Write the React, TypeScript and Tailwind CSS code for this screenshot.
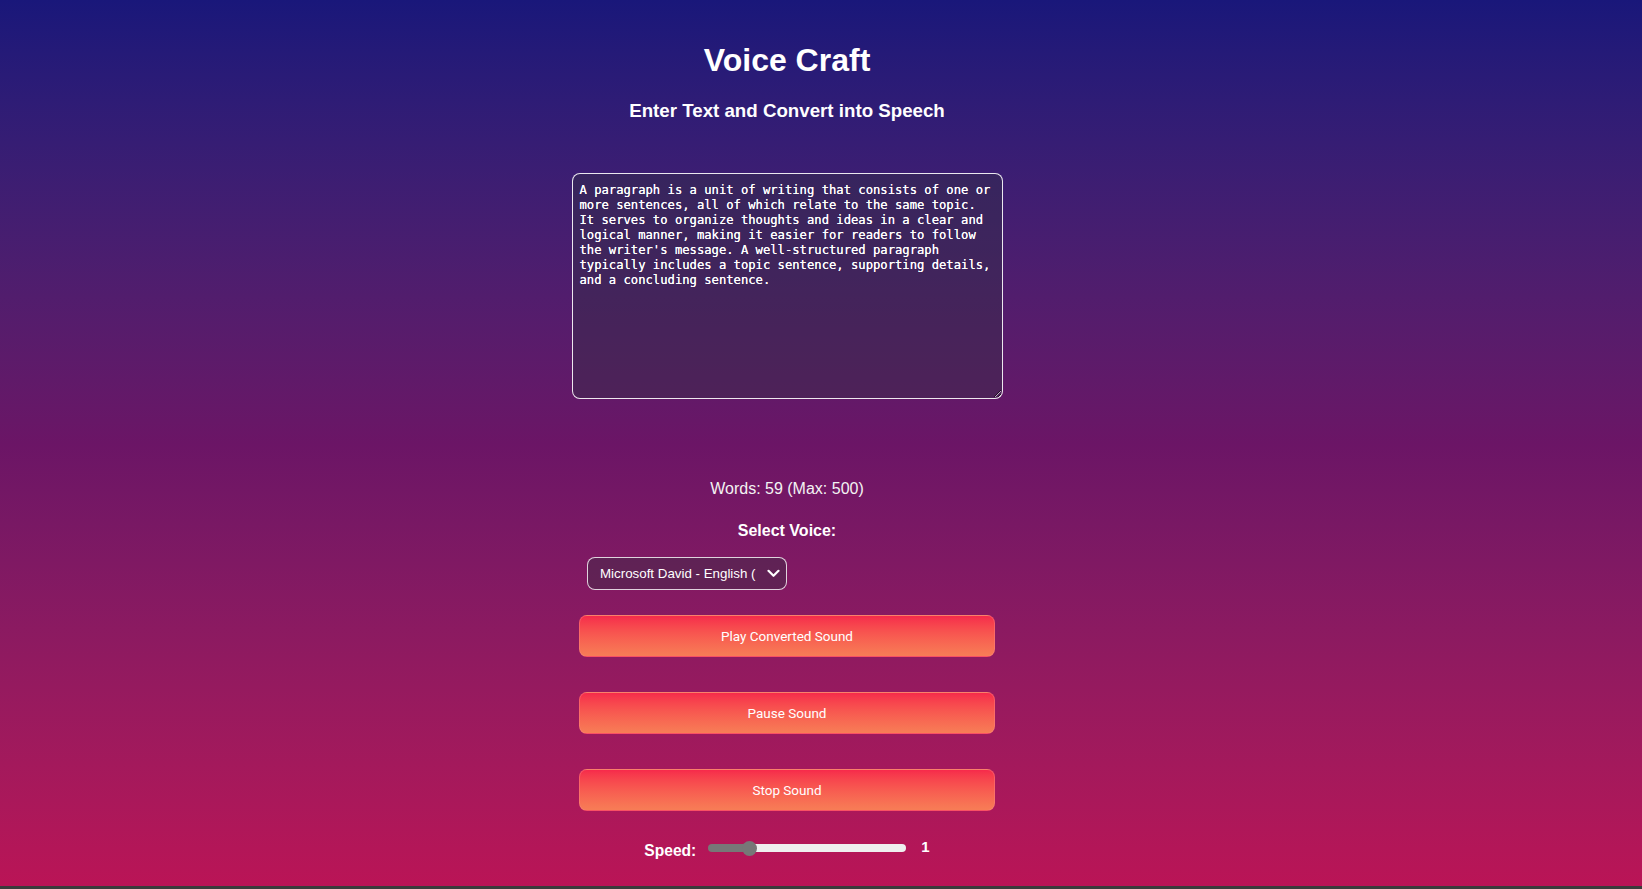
import React, { useState } from 'react';

const PARAGRAPH =
  "A paragraph is a unit of writing that consists of one or more sentences, all of which relate to the same topic. It serves to organize thoughts and ideas in a clear and logical manner, making it easier for readers to follow the writer's message. A well-structured paragraph typically includes a topic sentence, supporting details, and a concluding sentence.";

const SPEED_MIN = 0.1;
const SPEED_MAX = 5;

function ActionButton({ label }: { label: string }) {
  return (
    <button
      type="button"
      className="w-full h-[42px] rounded-[8px] border border-[#ff8a8a]/40 bg-gradient-to-b from-[#f62a4b] to-[#f77d56] text-white text-[13.5px] font-['Roboto',sans-serif] cursor-pointer"
    >
      {label}
    </button>
  );
}

export default function App() {
  const [text, setText] = useState(PARAGRAPH);
  const [speed, setSpeed] = useState(1);

  const words = text.trim() ? text.trim().split(/\s+/).length : 0;
  const pct = (speed - SPEED_MIN) / (SPEED_MAX - SPEED_MIN);
  // thumb is 15px on a 198px track
  const fillPx = 7.5 + 183 * pct;

  return (
    <div className="h-[889px] bg-[#3b3b3b] overflow-hidden font-['Liberation_Sans',Arial,sans-serif] text-white">
      <div className="h-[886px] bg-gradient-to-b from-[#19177a] via-[#6b1566] to-[#ba1456]">
        <div className="w-[1574px] flex flex-col items-center">
          <h1 className="mt-[42px] text-[32px] leading-[37px] font-bold">Voice Craft</h1>
          <h3 className="mt-[21px] text-[18.72px] leading-[22px] font-bold">
            Enter Text and Convert into Speech
          </h3>

          <textarea
            value={text}
            onChange={(e) => setText(e.target.value)}
            spellCheck={false}
            className="mt-[51px] w-[431px] h-[226px] rounded-[8px] border border-white/90 bg-[#2f3040]/40 pt-[9px] px-[7px] text-[12.2px] leading-[15px] text-white font-['DejaVu_Sans_Mono',monospace] outline-none [text-shadow:0_0_0.4px_white]"
          />

          <p className="mt-[81px] text-[16px] leading-[18px] text-[#f3f3f3]">
            Words: {words} (Max: 500)
          </p>

          <label className="mt-[24px] text-[16px] leading-[18px] font-bold">Select Voice:</label>

          <div className="mt-[17px] w-[416px] flex flex-col items-start">
            <div className="relative ml-[8px] w-[200px]">
              <select className="appearance-none w-full h-[33px] rounded-[8px] border border-white/80 bg-[#2f3040]/40 pl-[12px] pr-[30px] text-[13.33px] text-white outline-none">
                <option className="text-black">Microsoft David - English (United States)</option>
                <option className="text-black">Microsoft Zira - English (United States)</option>
              </select>
              <svg
                className="pointer-events-none absolute right-[7px] top-[12px]"
                width="13"
                height="9"
                viewBox="0 0 13 9"
                fill="none"
              >
                <path d="M1.5 1.8 L6.5 6.8 L11.5 1.8" stroke="white" strokeWidth="2.2" strokeLinecap="round" strokeLinejoin="round" />
              </svg>
            </div>

            <div className="mt-[25px] w-full flex flex-col gap-[35px]">
              <ActionButton label="Play Converted Sound" />
              <ActionButton label="Pause Sound" />
              <ActionButton label="Stop Sound" />
            </div>
          </div>

          <div className="mt-[26px] flex items-start">
            <span className="mt-[5px] text-[15.6px] leading-[17px] font-bold">Speed:</span>
            <input
              type="range"
              min={SPEED_MIN}
              max={SPEED_MAX}
              step={0.1}
              value={speed}
              onChange={(e) => setSpeed(Number(e.target.value))}
              className="ml-[12px] mt-[7px] w-[198px] h-[8px] appearance-none rounded-full outline-none [&::-webkit-slider-thumb]:appearance-none [&::-webkit-slider-thumb]:w-[15px] [&::-webkit-slider-thumb]:h-[15px] [&::-webkit-slider-thumb]:rounded-full [&::-webkit-slider-thumb]:bg-[#777777]"
              style={{
                background: `linear-gradient(to right, #777777 0px, #777777 ${fillPx}px, #efefef ${fillPx}px)`,
              }}
            />
            <span className="ml-[15px] mt-[1px] text-[15px] leading-[17px] font-bold">{speed}</span>
          </div>
        </div>
      </div>
    </div>
  );
}
